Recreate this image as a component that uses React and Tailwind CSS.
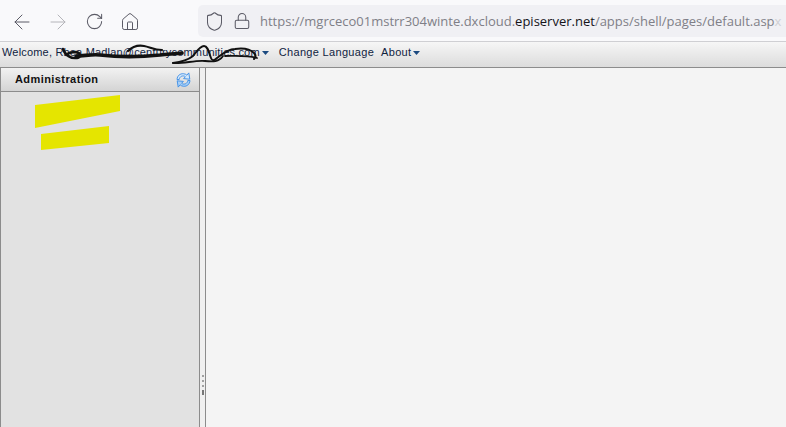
import { ArrowLeft, ArrowRight, RotateCw, House, Shield, Lock } from "lucide-react";

const Caret = () => (
  <svg width="7" height="4" viewBox="0 0 7 4" className="ml-[2px] mt-[1px]">
    <path d="M0 0h7L3.5 4z" fill="#1c4a80" />
  </svg>
);

const RefreshIcon = () => (
  <svg width="15" height="16" viewBox="0 0 15 16" fill="none">
    <path d="M1 7.5C1.3 3.5 4.2 1.5 7.4 1.7c1.5.1 2.7.7 3.5 1.5L12.8.9l1 6.3-6.2-.6 1.8-1.9C8.4 3.9 7 3.7 5.6 4.2 4.3 4.7 3.4 6 3.2 7.5z" fill="#d6e9fb" stroke="#3a8ce6" strokeWidth="0.9" />
    <path d="M14 8.5c-.3 4-3.2 6-6.4 5.8-1.5-.1-2.7-.7-3.5-1.5l-1.9 2.3-1-6.3 6.2.6-1.8 1.9c1 .8 2.4 1 3.8.5 1.3-.5 2.2-1.8 2.4-3.3z" fill="#a8d0f7" stroke="#3a8ce6" strokeWidth="0.9" />
  </svg>
);

const App = () => {
  return (
    <div className="flex h-[427px] w-[786px] flex-col overflow-hidden bg-[#f4f4f4] font-['Liberation_Sans',sans-serif]">
      {/* Browser toolbar */}
      <div className="flex h-[42px] shrink-0 items-center border-b border-[#cfcfd3] bg-[#f9f9fb] pl-[10px]">
        <ArrowLeft size={24} strokeWidth={1} className="mt-[2px] text-[#5b5b66]" />
        <ArrowRight size={24} strokeWidth={1} className="ml-[12px] mt-[2px] text-[#b4b4b9]" />
        <RotateCw size={19} strokeWidth={1.3} className="ml-[15px] mt-[2px] text-[#5b5b66]" />
        <House size={20} strokeWidth={1.2} className="ml-[16px] mt-[2px] text-[#5b5b66]" />
        <div className="ml-[58px] flex h-[32px] flex-1 items-center overflow-hidden rounded-l-[5px] bg-[#f0f0f4] pl-[6px]">
          <Shield size={21} strokeWidth={1.2} className="mt-[1px] shrink-0 text-[#5b5b66]" />
          <Lock size={18} strokeWidth={1.4} className="ml-[8px] mt-[1px] shrink-0 text-[#5b5b66]" />
          <div className="ml-[9px] mt-[2px] whitespace-nowrap font-['Open_Sans',sans-serif] text-[13px] text-[#7f7f87]">
            https://mgrceco01mstrr304winte.dxcloud.<span className="text-[#15141a]">episerver.net</span>/apps/shell/pages/default.asp<span className="text-[#cfcfd3]">x</span>
          </div>
        </div>
      </div>

      {/* Menu bar */}
      <div className="relative flex h-[26px] shrink-0 items-center border-b border-[#8c8c8c] bg-gradient-to-b from-[#f6f6f6] to-[#dcdcdc] pb-[4px] pl-[2px] text-[11px] text-[#10233f]">
        <span className="tracking-[0.18px]">Welcome, Rhea.Madlan@centurycommunities.com</span>
        <Caret />
        <span className="ml-[10px] tracking-[0.32px]">Change Language</span>
        <span className="ml-[7px] tracking-[0.3px]">About</span>
        <Caret />
        {/* pen scribble over the address, viewBox is in page coordinates */}
        <svg width="220" height="27" viewBox="55 40 220 27" fill="none" className="absolute left-[55px] top-[-2px]">
          <path d="M63 49c2 6 8 10 14 9 4-1 4-5-1-6-4 0-8 1-10 3" stroke="#111" strokeWidth="2.4" strokeLinecap="round" />
          <path d="M76 56c8 0 16-2 24-1 18 2 40 2 60 0 8-1 16-1 22-2" stroke="#111" strokeWidth="3.6" strokeLinecap="round" />
          <path d="M128 51c4-4 10-6 16-5 6 1 10 4 18 4" stroke="#111" strokeWidth="2.2" strokeLinecap="round" />
          <path d="M173 63c8-1 15-3 20-7 4-5 7-10 11-10 4 0 5 7 7 12 1 3 3 3 6 0 5-4 12-9 18-9 7-1 15 0 19 4 2 2 2 4 0 6" stroke="#111" strokeWidth="2" strokeLinecap="round" strokeLinejoin="round" />
          <path d="M173 63c10 1 22-3 32-2 8 1 14 1 18-5M225 56c10 0 22-1 32 2" stroke="#111" strokeWidth="1.8" strokeLinecap="round" />
        </svg>
      </div>

      <div className="flex min-h-0 flex-1">
        {/* Left pane */}
        <div className="relative flex w-[200px] shrink-0 flex-col border-x border-[#8c8c8c] bg-[#e2e2e2]">
          <div className="flex h-[24px] shrink-0 items-center justify-between border-b border-[#8c8c8c] bg-gradient-to-b from-[#f2f2f2] to-[#d4d4d4] pl-[14px] pr-[8px]">
            <span className="text-[11px] font-bold tracking-[0.42px] text-[#111]">Administration</span>
            <RefreshIcon />
          </div>
          {/* yellow highlighter marks */}
          <svg width="90" height="56" viewBox="0 0 90 56" className="absolute left-[34px] top-[27px]">
            <polygon points="0,10 85,0 85,16 0,33" fill="#e5e500" />
            <polygon points="6,39 74,31 74,48 6,55" fill="#e5e500" />
          </svg>
        </div>

        {/* Splitter */}
        <div className="flex w-[5px] shrink-0 flex-col items-center justify-end gap-[3px] bg-[#f0f0f0] pb-[32px]">
          <div className="h-[2px] w-[2px] bg-[#a0a0a0]" />
          <div className="h-[2px] w-[2px] bg-[#a0a0a0]" />
          <div className="h-[2px] w-[2px] bg-[#a0a0a0]" />
          <div className="h-[5px] w-[2px] bg-[#777]" />
        </div>

        {/* Content */}
        <div className="flex-1 border-l border-[#8c8c8c] bg-[#f4f4f4]" />
      </div>
    </div>
  );
};

export default App;
